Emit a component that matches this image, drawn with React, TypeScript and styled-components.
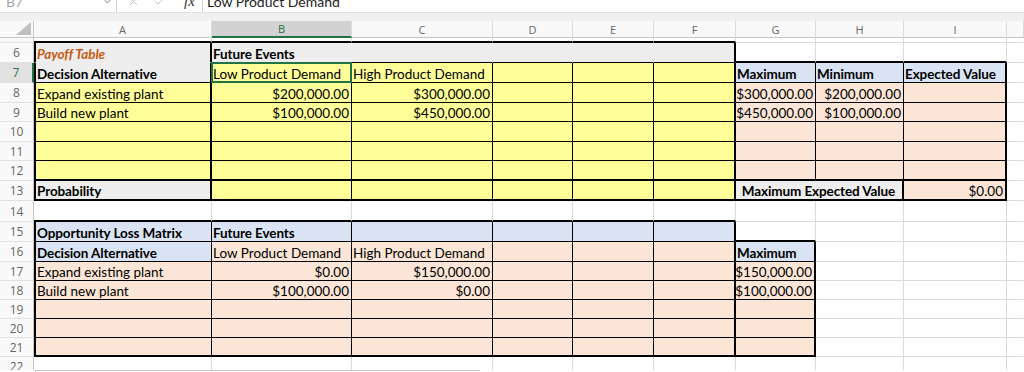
import React from "react";
import styled, { createGlobalStyle, css } from "styled-components";
import { X, Check, ChevronDown } from "lucide-react";

const GlobalStyle = createGlobalStyle`
  *, *::before, *::after {
    box-sizing: border-box;
  }

  html, body {
    margin: 0;
    padding: 0;
    background: #ffffff;
  }

  body {
    font-family: Lato, "Liberation Sans", sans-serif;
    overflow: hidden;
  }
`;

const GREEN = "#217346";
const GRID = "#dadada";
const TEMPLATE = "34px 178px 140px 141px 80px 81px 82px 80px 88px 103px 1fr";

const fills = {
  white: "#ffffff",
  grey: "#ededed",
  yellow: "#ffff99",
  peach: "#fbe5d6",
  blue: "#dae3f3",
};

const lines = {
  g: `1px solid ${GRID}`,
  n: "1px solid transparent",
  t: "1px solid #000000",
  T: "2px solid #000000",
};

type Fill = keyof typeof fills;
type Line = keyof typeof lines;

interface CellDef {
  text?: string;
  fill?: Fill;
  r?: Line;
  b?: Line;
  l?: Line;
  align?: "left" | "right" | "center";
  bold?: boolean;
  italic?: boolean;
  accent?: boolean;
  span?: number;
  selected?: boolean;
}

interface RowDef {
  n?: number;
  h: number;
  active?: boolean;
  cells: CellDef[];
}

const Screen = styled.div`
  width: 1024px;
  height: 372px;
  display: flex;
  flex-direction: column;
  overflow: hidden;
`;

const FormulaBar = styled.div`
  height: 13px;
  flex: none;
  display: flex;
  align-items: flex-end;
  overflow: hidden;
  background: #ffffff;
  border-bottom: 1px solid #e1e1e1;
`;

const NameBox = styled.div`
  width: 117px;
  height: 22px;
  flex: none;
  display: flex;
  align-items: center;
  justify-content: space-between;
  padding: 0 3px 0 6px;
  border-right: 1px solid #d4d4d4;
  color: #a6a6a6;
  font-size: 14px;
`;

const Tools = styled.div`
  width: 85px;
  height: 22px;
  flex: none;
  display: flex;
  align-items: center;
  padding-left: 10px;
  gap: 13px;
  color: #a6a6a6;
`;

const Fx = styled.span`
  margin-left: 5px;
  font-family: "Liberation Serif", serif;
  font-style: italic;
  font-size: 15px;
  color: #333333;
`;

const FormulaInput = styled.div`
  flex: 1;
  height: 22px;
  display: flex;
  align-items: center;
  padding-left: 4px;
  border-left: 1px solid #d4d4d4;
  font-size: 14px;
  color: #222222;
`;

const Band = styled.div`
  height: 8px;
  flex: none;
  background: #f0f0f0;
`;

const HeaderRow = styled.div`
  height: 17px;
  flex: none;
  display: grid;
  grid-template-columns: ${TEMPLATE};
  background: #f9f9f9;
`;

const Corner = styled.div`
  border-right: 1px solid #c6c6c6;
  border-bottom: 1px solid #c6c6c6;
  display: flex;
  align-items: flex-end;
  justify-content: flex-end;
  padding: 0 2px 2px 0;
`;

const ColHead = styled.div<{ $active?: boolean }>`
  display: flex;
  align-items: center;
  justify-content: center;
  border-right: 1px solid #dcdcdc;
  border-bottom: ${(p) => (p.$active ? `2px solid ${GREEN}` : "1px solid #c6c6c6")};
  background: ${(p) => (p.$active ? "#d2d2d2" : "transparent")};
  color: ${(p) => (p.$active ? GREEN : "#666666")};
  font-family: "Open Sans", sans-serif;
  font-size: 11px;
`;

const Body = styled.div`
  flex: 1;
  min-height: 0;
  overflow: hidden;
  display: flex;
  flex-direction: column;
`;

const Row = styled.div<{ $h: number }>`
  flex: none;
  height: ${(p) => p.$h}px;
  display: grid;
  grid-template-columns: ${TEMPLATE};
`;

const RowHead = styled.div<{ $active?: boolean }>`
  display: flex;
  align-items: center;
  justify-content: center;
  background: ${(p) => (p.$active ? "#e1e1e1" : "#f9f9f9")};
  border-bottom: 1px solid #e1e1e1;
  border-right: ${(p) => (p.$active ? `2px solid ${GREEN}` : "1px solid #c6c6c6")};
  color: ${(p) => (p.$active ? GREEN : "#666666")};
  font-family: "Open Sans", sans-serif;
  font-size: 12px;
`;

const Cell = styled.div<{
  $fill: Fill;
  $r: Line;
  $b: Line;
  $l?: Line;
  $align: string;
  $bold?: boolean;
  $italic?: boolean;
  $accent?: boolean;
  $span: number;
  $selected?: boolean;
}>`
  position: relative;
  grid-column: span ${(p) => p.$span};
  display: flex;
  align-items: center;
  justify-content: ${(p) =>
    p.$align === "right" ? "flex-end" : p.$align === "center" ? "center" : "flex-start"};
  padding: 2px 2px 0 1px;
  background: ${(p) => fills[p.$fill]};
  border-right: ${(p) => lines[p.$r]};
  border-bottom: ${(p) => lines[p.$b]};
  border-left: ${(p) => (p.$l ? lines[p.$l] : "0 none")};
  color: ${(p) => (p.$accent ? "#c55a11" : "#000000")};
  font-size: 13.5px;
  font-weight: ${(p) => (p.$bold ? 700 : 400)};
  font-style: ${(p) => (p.$italic ? "italic" : "normal")};
  letter-spacing: ${(p) => (p.$bold ? "-0.1px" : "0")};
  white-space: nowrap;

  ${(p) =>
    p.$selected &&
    css`
      &::after {
        content: "";
        position: absolute;
        inset: -1px;
        border: 2px solid ${GREEN};
        z-index: 2;
        pointer-events: none;
      }
    `}
`;

const BottomStrip = styled.div`
  height: 2px;
  flex: none;
  display: flex;
`;

const ScrollTrack = styled.div`
  margin-left: 35px;
  width: 445px;
  border-top: 1px solid #c6c6c6;
  border-left: 1px solid #c6c6c6;
`;

const J: CellDef = { r: "n" };
const rep = (count: number, d: CellDef): CellDef[] =>
  Array.from({ length: count }, () => ({ ...d }));

const payoffRow = (
  n: number,
  h: number,
  label = "",
  b1 = "",
  c1 = "",
  g = "",
  hh = "",
  b: Line = "t"
): RowDef => ({
  n,
  h,
  cells: [
    { text: label, fill: "yellow", l: "T", r: "T", b },
    { text: b1, fill: "yellow", align: "right", r: "t", b },
    { text: c1, fill: "yellow", align: "right", r: "t", b },
    ...rep(2, { fill: "yellow", r: "t", b }),
    { fill: "yellow", r: "T", b },
    { text: g, fill: "peach", align: "right", r: "t", b },
    { text: hh, fill: "peach", align: "right", r: "t", b },
    { fill: "peach", r: "T", b },
    J,
  ],
});

const lossRow = (
  n: number,
  h: number,
  label = "",
  b1 = "",
  c1 = "",
  g = "",
  b: Line = "t"
): RowDef => ({
  n,
  h,
  cells: [
    { text: label, fill: "peach", l: "T", r: "t", b },
    { text: b1, fill: "peach", align: "right", r: "t", b },
    { text: c1, fill: "peach", align: "right", r: "t", b },
    ...rep(2, { fill: "peach", r: "t", b }),
    { fill: "peach", r: "T", b },
    { text: g, fill: "peach", align: "right", r: "T", b },
    {},
    {},
    J,
  ],
});

const rows: RowDef[] = [
  { h: 5, cells: [...rep(6, { b: "T" }), {}, {}, {}, J] },
  {
    n: 6,
    h: 20,
    cells: [
      { text: "Payoff Table", fill: "grey", l: "T", r: "T", bold: true, italic: true, accent: true },
      { text: "Future Events", fill: "grey", r: "n", b: "t", bold: true },
      ...rep(3, { fill: "grey", r: "n", b: "t" }),
      { fill: "grey", r: "T", b: "t" },
      ...rep(3, { b: "T" }),
      J,
    ],
  },
  {
    n: 7,
    h: 20,
    active: true,
    cells: [
      { text: "Decision Alternative", fill: "grey", l: "T", r: "T", b: "t", bold: true },
      { text: "Low Product Demand", fill: "yellow", r: "t", b: "t", selected: true },
      { text: "High Product Demand", fill: "yellow", r: "t", b: "t" },
      ...rep(2, { fill: "yellow", r: "t", b: "t" }),
      { fill: "yellow", r: "T", b: "t" },
      { text: "Maximum", fill: "blue", bold: true, r: "t", b: "t" },
      { text: "Minimum", fill: "blue", bold: true, r: "t", b: "t" },
      { text: "Expected Value", fill: "blue", bold: true, r: "T", b: "t" },
      J,
    ],
  },
  payoffRow(8, 20, "Expand existing plant", "$200,000.00", "$300,000.00", "$300,000.00", "$200,000.00"),
  payoffRow(9, 19, "Build new plant", "$100,000.00", "$450,000.00", "$450,000.00", "$100,000.00"),
  payoffRow(10, 20),
  payoffRow(11, 19),
  payoffRow(12, 20, "", "", "", "", "", "T"),
  {
    n: 13,
    h: 20,
    cells: [
      { text: "Probability", fill: "grey", bold: true, l: "T", r: "T", b: "T" },
      ...rep(4, { fill: "yellow", r: "t", b: "T" }),
      { fill: "yellow", r: "T", b: "T" },
      { text: "Maximum Expected Value", fill: "grey", bold: true, align: "center", span: 2, r: "T", b: "T" },
      { text: "$0.00", fill: "peach", align: "right", r: "T", b: "T" },
      J,
    ],
  },
  { n: 14, h: 21, cells: [...rep(6, { b: "T" }), {}, {}, {}, J] },
  {
    n: 15,
    h: 20,
    cells: [
      { text: "Opportunity Loss Matrix", fill: "blue", bold: true, l: "T", r: "t", b: "t" },
      { text: "Future Events", fill: "blue", bold: true, r: "t", b: "t" },
      ...rep(3, { fill: "blue", r: "t", b: "t" }),
      { fill: "blue", r: "T", b: "t" },
      { b: "T" },
      {},
      {},
      J,
    ],
  },
  {
    n: 16,
    h: 20,
    cells: [
      { text: "Decision Alternative", fill: "blue", bold: true, l: "T", r: "t", b: "t" },
      { text: "Low Product Demand", fill: "peach", r: "t", b: "t" },
      { text: "High Product Demand", fill: "peach", r: "t", b: "t" },
      ...rep(2, { fill: "peach", r: "t", b: "t" }),
      { fill: "peach", r: "T", b: "t" },
      { text: "Maximum", fill: "blue", bold: true, r: "T", b: "t" },
      {},
      {},
      J,
    ],
  },
  lossRow(17, 19, "Expand existing plant", "$0.00", "$150,000.00", "$150,000.00"),
  lossRow(18, 19, "Build new plant", "$100,000.00", "$0.00", "$100,000.00"),
  lossRow(19, 19),
  lossRow(20, 19),
  lossRow(21, 19, "", "", "", "", "T"),
  { n: 22, h: 20, cells: [{}, {}, {}, {}, {}, {}, {}, {}, {}, J] },
];

const columns = ["A", "B", "C", "D", "E", "F", "G", "H", "I", ""];

const App: React.FC = () => {
  return (
    <Screen>
      <GlobalStyle />
      <FormulaBar>
        <NameBox>
          <span>B7</span>
          <ChevronDown size={11} strokeWidth={1.5} color="#444444" />
        </NameBox>
        <Tools>
          <X size={13} strokeWidth={1.2} />
          <Check size={13} strokeWidth={1.2} />
          <Fx>fx</Fx>
        </Tools>
        <FormulaInput>Low Product Demand</FormulaInput>
      </FormulaBar>
      <Band />
      <HeaderRow>
        <Corner>
          <svg width="15" height="13" viewBox="0 0 15 13">
            <polygon points="0,13 15,0 15,13" fill="#bfbfbf" />
          </svg>
        </Corner>
        {columns.map((c, i) => (
          <ColHead key={i} $active={c === "B"}>
            {c}
          </ColHead>
        ))}
      </HeaderRow>
      <Body>
        {rows.map((row, ri) => (
          <Row key={ri} $h={row.h}>
            <RowHead $active={row.active}>{row.n ?? ""}</RowHead>
            {row.cells.map((c, ci) => (
              <Cell
                key={ci}
                $fill={c.fill ?? "white"}
                $r={c.r ?? (c.fill && c.fill !== "white" ? "n" : "g")}
                $b={c.b ?? (c.fill && c.fill !== "white" ? "n" : "g")}
                $l={c.l}
                $align={c.align ?? "left"}
                $bold={c.bold}
                $italic={c.italic}
                $accent={c.accent}
                $span={c.span ?? 1}
                $selected={c.selected}
              >
                {c.text}
              </Cell>
            ))}
          </Row>
        ))}
      </Body>
      <BottomStrip>
        <ScrollTrack />
      </BottomStrip>
    </Screen>
  );
};

export default App;
